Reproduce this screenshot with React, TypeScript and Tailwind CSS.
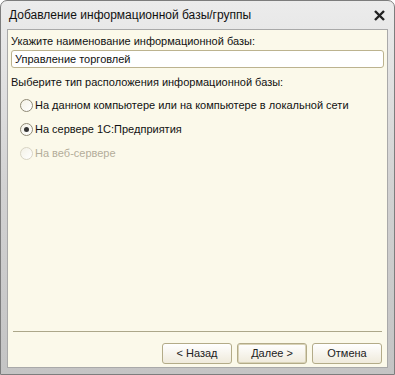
import React from "react";

const font = { fontFamily: '"Liberation Sans", Arial, sans-serif' };

function Radio({ checked, disabled }: { checked?: boolean; disabled?: boolean }) {
  return (
    <span
      className={
        "relative flex h-[13px] w-[13px] shrink-0 items-center justify-center rounded-full border bg-gradient-to-br from-[#f3f1e6] to-white " +
        (disabled ? "border-[#d8d4c4]" : "border-[#8f8a76]")
      }
    >
      {checked && <span className="h-[5px] w-[5px] rounded-full bg-[#333]" />}
    </span>
  );
}

function Button({ label, focused }: { label: string; focused?: boolean }) {
  return (
    <div
      className={
        "flex h-[21px] w-[70px] items-center justify-center rounded-[3px] border border-[#b3ab88] bg-gradient-to-b from-white to-[#efeadb] text-[11px] text-[#222]" +
        (focused ? " shadow-[inset_0_0_0_1px_#d9d3b8]" : "")
      }
    >
      {label}
    </div>
  );
}

export default function App() {
  return (
    <div className="h-[375px] w-[395px] bg-white" style={font}>
      <div className="flex h-full w-full flex-col rounded-t-[7px] border border-[#7d7d7d] bg-gradient-to-b from-[#ececec] via-[#d2d2d2] to-[#c4c4c4]">
        {/* Title bar */}
        <div className="flex h-[28px] items-center justify-between pl-[8px] pr-[9px]">
          <span className="text-[12px] text-[#111]">Добавление информационной базы/группы</span>
          <svg width="11" height="11" viewBox="0 0 11 11">
            <path d="M1 1 L10 10 M10 1 L1 10" stroke="#222" strokeWidth="2.4" />
          </svg>
        </div>

        {/* Content */}
        <div className="mx-[6px] mb-[6px] flex flex-1 flex-col border border-[#a9a9a9] bg-[#fbf9ea] text-[11px] text-[#111]">
          <div className="px-[3px] pt-[4px]">
            <div className="leading-[14px]">Укажите наименование информационной базы:</div>
            <div className="mt-[2px] flex h-[18px] items-center rounded-[3px] border border-[#bcb38f] bg-white px-[3px] leading-none">
              Управление торговлей
            </div>
          </div>
          <div className="mt-[7px] px-[3px] leading-[14px]">
            Выберите тип расположения информационной базы:
          </div>
          <div className="mt-[8px] flex flex-col gap-[8px] pl-[12px]">
            <label className="flex h-[16px] items-center gap-[2px]">
              <Radio />
              <span>На данном компьютере или на компьютере в локальной сети</span>
            </label>
            <label className="flex h-[16px] items-center gap-[2px]">
              <Radio checked />
              <span>На сервере 1С:Предприятия</span>
            </label>
            <label className="flex h-[16px] items-center gap-[2px] text-[#b3ad9a]">
              <Radio disabled />
              <span>На веб-сервере</span>
            </label>
          </div>
          <div className="flex-1" />
          <div className="mx-[5px] border-t border-[#aca78a]" />
          <div className="flex justify-end gap-[5px] px-[5px] pb-[3px] pt-[11px]">
            <Button label="< Назад" />
            <Button label="Далее >" focused />
            <Button label="Отмена" />
          </div>
        </div>
      </div>
    </div>
  );
}
